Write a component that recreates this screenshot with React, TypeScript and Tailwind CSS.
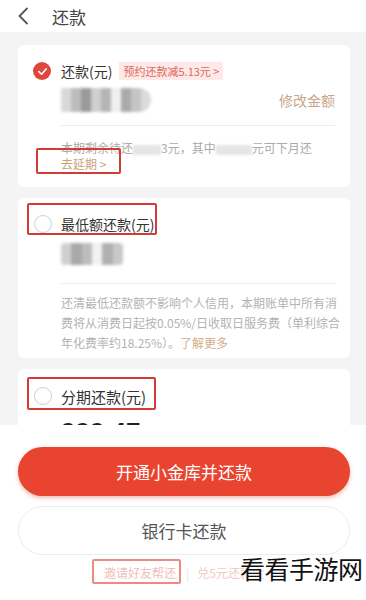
import React from "react";

const font = { fontFamily: '"Noto Sans CJK SC", "Noto Sans", sans-serif' };

function Mosaic({ cells, className }: { cells: string[]; className: string }) {
  return (
    <div className={`flex overflow-hidden blur-[1.5px] ${className}`}>
      {cells.map((c, i) => (
        <div key={i} className="flex-1 h-full" style={{ background: c }} />
      ))}
    </div>
  );
}

function Radio({ checked }: { checked?: boolean }) {
  if (checked) {
    return (
      <div className="w-[18px] h-[18px] rounded-full bg-[#e0463a] flex items-center justify-center shrink-0">
        <svg width="11" height="11" viewBox="0 0 12 12">
          <path d="M2 6.2 L5 9 L10 3.2" fill="none" stroke="#fff" strokeWidth="1.8" strokeLinecap="round" strokeLinejoin="round" />
        </svg>
      </div>
    );
  }
  return <div className="w-[18px] h-[18px] rounded-full border-[1.5px] border-[#cfcfcf] bg-white shrink-0" />;
}

function Blur({ w }: { w: number }) {
  return <span className="inline-block h-[10px] bg-[#e6e6e6] align-middle blur-[1px]" style={{ width: w }} />;
}

export default function App() {
  return (
    <div className="w-[366px] h-[600px] overflow-hidden bg-white relative" style={font}>
      {/* header */}
      <div className="h-[32px] flex items-center bg-white">
        <svg className="ml-[17px]" width="12" height="18" viewBox="0 0 12 18">
          <path d="M10 1.5 L2.5 9 L10 16.5" fill="none" stroke="#555" strokeWidth="1.8" strokeLinecap="round" strokeLinejoin="round" />
        </svg>
        <span className="ml-[23px] text-[17px] text-[#444] leading-none">还款</span>
      </div>

      {/* scroll area */}
      <div className="h-[393px] overflow-hidden bg-[#f4f4f4] pl-[18px] pr-[16px] pt-[13px] flex flex-col gap-[11px]">
        {/* card 1 */}
        <div className="relative bg-white rounded-[6px] h-[142px] shrink-0 pl-[15px] pr-[15px] pt-[17px]">
          <div className="flex items-center h-[18px]">
            <Radio checked />
            <span className="ml-[10px] text-[14px] text-[#333] leading-none">还款(元)</span>
            <span className="ml-[7px] h-[18px] px-[4px] bg-[#fdeae8] text-[#e0675a] text-[11px] leading-[18px]">预约还款减5.13元 &gt;</span>
          </div>
          <div className="flex items-center justify-between ml-[28px] mt-[8px] h-[24px]">
            <Mosaic
              className="w-[90px] h-[24px] rounded-r-full"
              cells={["#d9d9d9", "#bcbcbc", "#9a9a9a", "#cfcfcf", "#b5b5b5", "#f0f0f0", "#aaaaaa", "#c4c4c4", "#dadada"]}
            />
            <span className="text-[14px] text-[#c9a68a] leading-none">修改金额</span>
          </div>
          <div className="ml-[28px] mt-[13px] h-px bg-[#ececec]" />
          <div className="ml-[28px] mt-[14px] text-[12px] text-[#aaaaaa] leading-[16px] whitespace-nowrap">
            本期剩余待还<Blur w={28} />3元，其中<Blur w={36} />元可下月还
          </div>
          <div className="ml-[28px] text-[12px] text-[#c9a27a] leading-[16px]">去延期 &gt;</div>
          <div className="absolute left-[18px] top-[103px] w-[85px] h-[26px] border-2 border-[#d33b36] rounded-[2px]" />
        </div>

        {/* card 2 */}
        <div className="relative bg-white rounded-[6px] h-[160px] shrink-0 pl-[16px] pr-[15px] pt-[17px]">
          <div className="flex items-center h-[18px]">
            <Radio />
            <span className="ml-[9px] text-[14px] text-[#333] leading-none">最低额还款(元)</span>
          </div>
          <div className="ml-[27px] mt-[10px]">
            <Mosaic
              className="w-[62px] h-[22px] rounded-[4px]"
              cells={["#d0d0d0", "#a9a9a9", "#bdbdbd", "#f2f2f2", "#b0b0b0", "#c8c8c8"]}
            />
          </div>
          <div className="ml-[27px] mt-[18px] h-px bg-[#ececec]" />
          <div className="ml-[27px] mt-[9px] text-[12px] text-[#b3b3b3] leading-[20px] whitespace-nowrap">
            还清最低还款额不影响个人信用，本期账单中所有消
            <br />
            费将从消费日起按0.05%/日收取日服务费（单利综合
            <br />
            年化费率约18.25%）。<span className="text-[#d2ad8a]">了解更多</span>
          </div>
          <div className="absolute left-[9px] top-[5px] w-[130px] h-[32px] border-2 border-[#d33b36] rounded-[2px]" />
        </div>

        {/* card 3 */}
        <div className="relative bg-white rounded-[6px] h-[120px] shrink-0 pl-[16px] pr-[15px] pt-[18px]">
          <div className="flex items-center h-[18px]">
            <Radio />
            <span className="ml-[9px] text-[15px] text-[#333] leading-none">分期还款(元)</span>
          </div>
          <div className="ml-[27px] mt-[14px] text-[26px] font-bold text-[#222] leading-none" style={{ fontFamily: '"Liberation Sans", sans-serif' }}>
            999.47
          </div>
          <div className="absolute left-[9px] top-[8px] w-[129px] h-[33px] border-2 border-[#d33b36] rounded-[2px]" />
        </div>
      </div>

      {/* bottom */}
      <div className="h-[175px] bg-white px-[18px] pt-[22px] pr-[16px] relative">
        <div className="h-[49px] rounded-full bg-[#e9442f] flex items-center justify-center shadow-[0_2px_4px_rgba(200,60,40,0.35)]">
          <span className="text-white text-[17px]">开通小金库并还款</span>
        </div>
        <div className="mt-[10px] h-[49px] rounded-full bg-white border border-[#ececec] flex items-center justify-center">
          <span className="text-[#555] text-[17px]">银行卡还款</span>
        </div>
        <div className="mt-[12px] flex items-center text-[12px] leading-none">
          <span className="ml-[86px] text-[#f1bdb5]">邀请好友帮还</span>
          <span className="ml-[10px] text-[#e6e6e6]">|</span>
          <span className="ml-[8px] text-[#f1c9c2]">兑5元还款金</span>
        </div>
        <div className="absolute left-[92px] top-[134px] w-[89px] h-[25px] border-2 border-[#ec8a86] rounded-[2px]" />
      </div>

      {/* watermark */}
      <div
        className="absolute left-[240px] top-[556px] text-[25px] text-[#111] leading-none tracking-[-0.5px]"
        style={{ textShadow: "0 0 2px #fff, 0 0 2px #fff, 0 0 3px #fff" }}
      >
        看看手游网
      </div>
    </div>
  );
}
